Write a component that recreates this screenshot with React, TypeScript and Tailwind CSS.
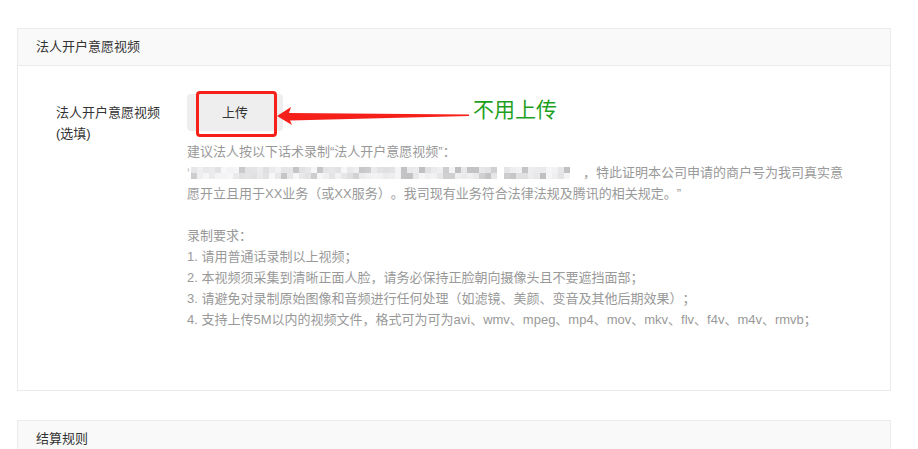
import React from "react";

const font = { fontFamily: '"Liberation Sans", "Noto Sans CJK SC", sans-serif' };

function seeded(n: number) {
  const x = Math.sin(n * 12.9898 + 78.233) * 43758.5453;
  return x - Math.floor(x);
}

function Mosaic({ cols, seed }: { cols: number; seed: number }) {
  const rows = [0, 1];
  return (
    <span className="inline-flex flex-col align-middle">
      {rows.map((r) => (
        <span key={r} className="flex">
          {Array.from({ length: cols }).map((_, i) => {
            const v = seeded(seed + i * 3 + r * 101);
            const g = Math.round(v < 0.25 ? 190 + v * 80 : 215 + v * 32);
            return (
              <span
                key={i}
                className="block w-[6px] h-[6px]"
                style={{ backgroundColor: `rgb(${g},${g},${g + 2})` }}
              />
            );
          })}
        </span>
      ))}
    </span>
  );
}

function Card({ title, children }: { title: string; children?: React.ReactNode }) {
  return (
    <div className="w-[874px] border border-[#ebebeb] bg-white">
      <div className="h-[37px] flex items-center pl-[18px] bg-[#f9f9f9] border-b border-[#ebebeb] text-[13px] text-[#333]">
        {title}
      </div>
      {children}
    </div>
  );
}

export default function App() {
  return (
    <div
      className="w-[918px] h-[449px] overflow-hidden bg-white pt-[28px] pl-[17px] [text-spacing-trim:space-all]"
      style={font}
    >
      <Card title="法人开户意愿视频">
        <div className="flex pt-[28px] pb-[60px]">
          <div className="w-[169px] pl-[38px] pt-[8px] text-[13px] leading-[21px] text-[#333]">
            <div>法人开户意愿视频</div>
            <div>(选填)</div>
          </div>
          <div className="flex flex-col">
            <div className="relative w-[96px] h-[37px]">
              <div className="w-[96px] h-[37px] rounded-[4px] bg-[#eeeeee] flex items-center justify-center text-[13px] text-[#333]">
                上传
              </div>
              <div className="absolute left-[9px] top-[-3px] w-[81px] h-[46px] border-[3px] border-[#f5201a] rounded-[4px]" />
              <svg
                className="absolute left-[89px] top-[11px]"
                width="200"
                height="20"
                viewBox="0 0 200 20"
              >
                <polygon
                  points="1,11 15,2 13,8 193,9.5 193,11 14,15.5 16,20"
                  fill="#f5201a"
                />
              </svg>
              <div className="absolute left-[286px] top-[4px] whitespace-nowrap text-[21px] leading-[24px] text-[#1f9f1f]">
                不用上传
              </div>
            </div>
            <div className="mt-[10px] text-[13px] leading-[21px] text-[#999] whitespace-nowrap">
              <div>建议法人按以下话术录制“法人开户意愿视频”：</div>
              <div className="flex items-center">
                <span className="text-[#bbb] mr-[1px]">‘</span>
                <Mosaic cols={51} seed={3} />
                <span className="w-[7px]" />
                <Mosaic cols={11} seed={71} />
                <span className="ml-[13px]">，特此证明本公司申请的商户号为我司真实意</span>
              </div>
              <div>愿开立且用于XX业务（或XX服务）。我司现有业务符合法律法规及腾讯的相关规定。”</div>
              <div className="h-[21px]" />
              <div>录制要求：</div>
              <div>1. 请用普通话录制以上视频；</div>
              <div>2. 本视频须采集到清晰正面人脸，请务必保持正脸朝向摄像头且不要遮挡面部；</div>
              <div>3. 请避免对录制原始图像和音频进行任何处理（如滤镜、美颜、变音及其他后期效果）；</div>
              <div>4. 支持上传5M以内的视频文件，格式可为可为avi、wmv、mpeg、mp4、mov、mkv、flv、f4v、m4v、rmvb；</div>
            </div>
          </div>
        </div>
      </Card>
      <div className="mt-[29px]">
        <Card title="结算规则">
          <div className="h-[60px]" />
        </Card>
      </div>
    </div>
  );
}
